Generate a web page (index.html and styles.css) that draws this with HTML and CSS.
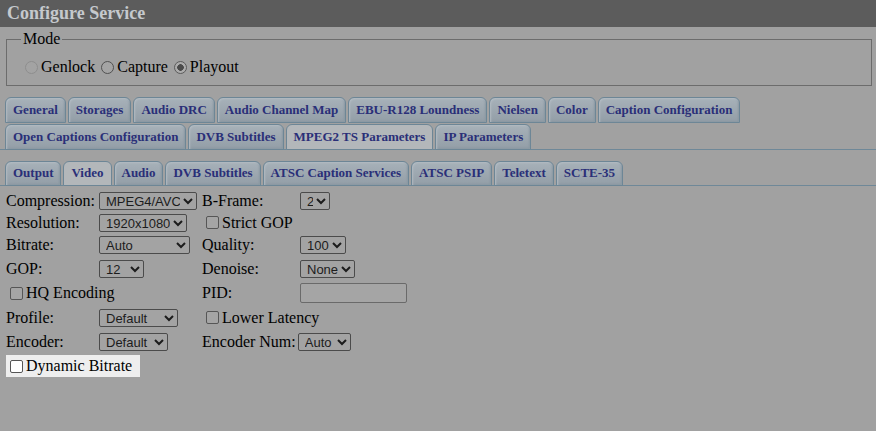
FILE: index.html
```html
<!DOCTYPE html>
<html>
<head>
<meta charset="utf-8">
<title>Configure Service</title>
<link rel="stylesheet" href="styles.css">
</head>
<body>
<div class="titlebar">Configure Service</div>
<fieldset class="mode">
  <legend>Mode</legend>
  <label class="opt"><input type="radio" name="mode" disabled>Genlock</label>
  <label class="opt"><input type="radio" name="mode">Capture</label>
  <label class="opt"><input type="radio" name="mode" checked>Playout</label>
</fieldset>
<ul class="tabs main-tabs">
  <li>General</li>
  <li>Storages</li>
  <li>Audio DRC</li>
  <li>Audio Channel Map</li>
  <li>EBU-R128 Loundness</li>
  <li>Nielsen</li>
  <li>Color</li>
  <li>Caption Configuration</li>
  <li>Open Captions Configuration</li>
  <li>DVB Subtitles</li>
  <li class="active">MPEG2 TS Parameters</li>
  <li>IP Parameters</li>
</ul>
<ul class="tabs sub-tabs">
  <li>Output</li>
  <li class="active">Video</li>
  <li>Audio</li>
  <li>DVB Subtitles</li>
  <li>ATSC Caption Services</li>
  <li>ATSC PSIP</li>
  <li>Teletext</li>
  <li>SCTE-35</li>
</ul>
<div class="form">
  <span class="lbl">Compression:</span>
  <select class="w-comp"><option>MPEG4/AVC</option></select>
  <span class="lbl">B-Frame:</span>
  <select class="w-bf"><option>2</option></select>

  <span class="lbl">Resolution:</span>
  <select class="w-res"><option>1920x1080</option></select>
  <label class="chk span2"><input type="checkbox">Strict GOP</label>

  <span class="lbl">Bitrate:</span>
  <select class="w-br"><option>Auto</option></select>
  <span class="lbl">Quality:</span>
  <select class="w-q"><option>100</option></select>

  <span class="lbl">GOP:</span>
  <select class="w-gop"><option>12</option></select>
  <span class="lbl">Denoise:</span>
  <select class="w-dn"><option>None</option></select>

  <label class="chk span2"><input type="checkbox">HQ Encoding</label>
  <span class="lbl">PID:</span>
  <input type="text" class="pid">

  <span class="lbl">Profile:</span>
  <select class="w-prof"><option>Default</option></select>
  <label class="chk span2"><input type="checkbox">Lower Latency</label>

  <span class="lbl">Encoder:</span>
  <select class="w-enc"><option>Default</option></select>
  <span class="span2 inline"><span class="lbl">Encoder Num:</span><select class="w-num"><option>Auto</option></select></span>

  <label class="chk span2 highlight"><input type="checkbox">Dynamic Bitrate</label>
</div>
</body>
</html>
```
FILE: styles.css
```css
html, body {
  margin: 0;
  padding: 0;
}
body {
  background: #a1a1a1;
  font-family: "Liberation Serif", "Times New Roman", serif;
  font-size: 16px;
  color: #000;
  width: 876px;
  height: 431px;
  overflow: hidden;
}
.titlebar {
  height: 27px;
  background: #5c5c5c;
  color: #c5c9cd;
  font-weight: bold;
  font-size: 18px;
  line-height: 27px;
  padding-left: 7px;
}
.mode {
  margin: 3px 4px 0 6px;
  padding: 9px 0 7px 16px;
  border: 1px solid #6c6c6c;
  min-width: 0;
}
.mode legend {
  padding: 0 2px;
  margin-left: -2px;
  line-height: 18px;
  font-size: 16px;
}
.opt {
  display: inline-flex;
  align-items: center;
  line-height: 20px;
}
input[type=radio] {
  appearance: none;
  -webkit-appearance: none;
  width: 13px;
  height: 13px;
  margin: 0 3px 0 2px;
  border: 1px solid #515151;
  border-radius: 50%;
  background: #a4a4a4;
  box-sizing: border-box;
}
input[type=radio]:disabled {
  border-color: #8e8e8e;
  background: #a3a3a3;
}
input[type=radio]:checked {
  border-color: #5b5b5b;
  background: radial-gradient(circle, #4b4b4b 0 3px, #acacac 3.6px);
}
.tabs {
  list-style: none;
  margin: 0;
  padding: 0 0 0 5px;
  display: flex;
  flex-wrap: wrap;
  row-gap: 1px;
  column-gap: 2px;
  background: linear-gradient(#6f8898, #6f8898) left bottom / 100% 1px no-repeat;
}
.main-tabs {
  margin-top: 11px;
}
.sub-tabs {
  margin-top: 11px;
}
.tabs li {
  box-sizing: border-box;
  height: 26px;
  padding: 0 7px;
  display: flex;
  align-items: center;
  border: 1px solid #6d8696;
  border-radius: 6px 6px 0 0;
  background: linear-gradient(#a7b1b9, #939ea7);
  box-shadow: inset 1px 1px 2px #b3bcc3, inset -1px -1px 2px #8896a0;
  color: #2a2f78;
  font-weight: bold;
  font-size: 13px;
  white-space: nowrap;
}
.sub-tabs li {
  height: 25px;
}
.tabs li.active {
  background: #b3b7ba;
  box-shadow: none;
}
.form {
  display: grid;
  grid-template-columns: 93px 103px 98px 1fr;
  grid-template-rows: 22px 22px 23px 24px 25px 24px 24px 25px;
  align-items: center;
  padding-left: 6px;
  margin-top: 4px;
}
.lbl {
  line-height: 18px;
  white-space: nowrap;
}
.span2 {
  grid-column: span 2;
}
.inline {
  display: flex;
  align-items: center;
}
.inline select {
  margin-left: 2px;
}
select {
  font-family: Arial, "Liberation Sans", sans-serif;
  font-size: 13px;
  height: 18px;
  padding: 0 0 0 2px;
  background-color: #a3a3a3;
  color: #1c1c1c;
  border: 1px solid #4b4b4b;
  border-radius: 2px;
  justify-self: start;
}
.w-comp { width: 98px; }
.w-bf { width: 30px; }
.w-res { width: 88px; }
.w-br { width: 91px; }
.w-q { width: 46px; }
.w-gop { width: 45px; }
.w-dn { width: 55px; }
.w-prof { width: 79px; }
.w-enc { width: 69px; }
.w-num { width: 53px; }
.pid {
  width: 107px;
  height: 20px;
  box-sizing: border-box;
  border: 1px solid #6a6a6a;
  border-radius: 2px;
  background: #a5a5a5;
  padding: 0;
  justify-self: start;
}
.chk {
  display: inline-flex;
  align-items: center;
  justify-self: start;
  line-height: 18px;
}
input[type=checkbox] {
  appearance: none;
  -webkit-appearance: none;
  width: 13px;
  height: 13px;
  margin: 0 3px 0 4px;
  box-sizing: border-box;
  border: 1px solid #565656;
  border-radius: 2px;
  background: #a5a5a5;
}
.highlight {
  background: #eeeeee;
  height: 22px;
  padding-right: 8px;
}
.highlight input[type=checkbox] {
  border-color: #555;
  background: #fff;
}
```
